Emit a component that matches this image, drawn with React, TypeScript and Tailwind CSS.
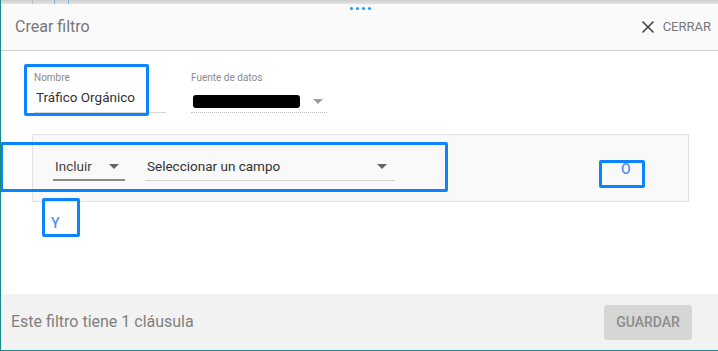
import { X } from 'lucide-react'

function Caret({ className = '' }: { className?: string }) {
  return (
    <svg width="10" height="5" viewBox="0 0 10 5" className={className}>
      <path d="M0 0 L10 0 L5 5 Z" fill="currentColor" />
    </svg>
  )
}

export default function App() {
  return (
    <div
      className="relative w-[718px] h-[351px] overflow-hidden bg-white border-l border-b border-[#17898a] flex flex-col"
      style={{ fontFamily: 'Roboto, "Noto Sans", Arial, sans-serif' }}
    >
      {/* strip of the page behind */}
      <div className="h-[4px] bg-gradient-to-b from-[#cfcfcf] to-[#e4e4e4] flex">
        <div className="w-[32px] border-r border-[#bdbdbd]" />
        <div className="w-[22px] border-r border-[#7fb3d9]" />
        <div className="w-[14px] border-r border-[#7fb3d9]" />
      </div>

      {/* header */}
      <div className="relative h-[47px] bg-[#fafafa] border-b border-[#d2d2d2] flex items-center justify-between pl-[14px] pr-[7px]">
        <span className="text-[16px] text-[#777]">Crear filtro</span>
        <div className="absolute left-[349px] top-[3px] flex gap-[3px]">
          <span className="w-[3px] h-[3px] bg-[#2196f3] rounded-full" />
          <span className="w-[3px] h-[3px] bg-[#2196f3] rounded-full" />
          <span className="w-[3px] h-[3px] bg-[#2196f3] rounded-full" />
          <span className="w-[3px] h-[3px] bg-[#2196f3] rounded-full" />
        </div>
        <button className="flex items-center gap-[5px] text-[13px] text-[#777]">
          <X size={20} strokeWidth={2} className="text-[#444]" />
          CERRAR
        </button>
      </div>

      {/* body */}
      <div className="flex-1 relative">
        <div className="flex gap-[25px] pl-[33px] pt-[21px]">
          <div className="w-[132px]">
            <div className="text-[10px] text-[#8a8a8a] leading-[12px]">Nombre</div>
            <div className="h-[29px] flex items-end pb-[5px] pl-[2px] text-[13.5px] text-[#333] border-b border-[#d6d6d6]">
              Tráfico Orgánico
            </div>
          </div>
          <div className="w-[136px]">
            <div className="text-[10px] text-[#8a8a8a] leading-[12px]">Fuente de datos</div>
            <div className="h-[29px] flex items-center justify-between pt-[6px] pr-[4px] border-b border-dotted border-[#bdbdbd]">
              <div className="w-[107px] h-[13px] bg-black rounded-[3px] ml-[2px]" />
              <Caret className="text-[#9e9e9e]" />
            </div>
          </div>
        </div>

        {/* clause panel */}
        <div className="ml-[31px] mt-[21px] w-[657px] h-[68px] bg-[#f9f9f9] border border-[#e2e2e2] flex items-center pl-[20px] pb-[2px]">
          <div className="w-[72px] h-[28px] flex items-center justify-between pl-[2px] pr-[6px] border-b-2 border-[#8a8a8a] text-[13.5px] text-[#444]">
            Incluir
            <Caret className="text-[#666]" />
          </div>
          <div className="ml-[20px] w-[250px] h-[28px] flex items-center justify-between pl-[2px] pr-[8px] border-b border-[#d4d4d4] text-[13.5px] text-[#333]">
            Seleccionar un campo
            <Caret className="text-[#666]" />
          </div>
          <div className="ml-[226px] text-[14px] font-medium leading-none text-[#5a8ff0] mt-[4px]">O</div>
        </div>
        <div className="ml-[50px] mt-[14px] text-[14px] font-medium leading-none text-[#5a8ff0]">Y</div>

        {/* annotation boxes */}
        <div className="absolute left-[23px] top-[13px] w-[125px] h-[52px] border-[3px] border-[#0a84ff] rounded-[2px]" />
        <div className="absolute left-[-1px] top-[91px] w-[448px] h-[50px] border-[3px] border-[#0a84ff] rounded-[2px]" />
        <div className="absolute left-[598px] top-[109px] w-[46px] h-[28px] border-[3px] border-[#0a84ff] rounded-[2px]" />
        <div className="absolute left-[41px] top-[147px] w-[38px] h-[39px] border-[3px] border-[#0a84ff] rounded-[2px]" />
      </div>

      {/* footer */}
      <div className="h-[56px] bg-[#f2f2f2] flex items-center justify-between pl-[10px] pr-[26px]">
        <span className="text-[16px] text-[#808080]">Este filtro tiene 1 cláusula</span>
        <button className="w-[88px] h-[35px] rounded-[3px] bg-[#d6d6d6] text-[14px] font-medium text-[#8c8c8c]">
          GUARDAR
        </button>
      </div>
    </div>
  )
}
